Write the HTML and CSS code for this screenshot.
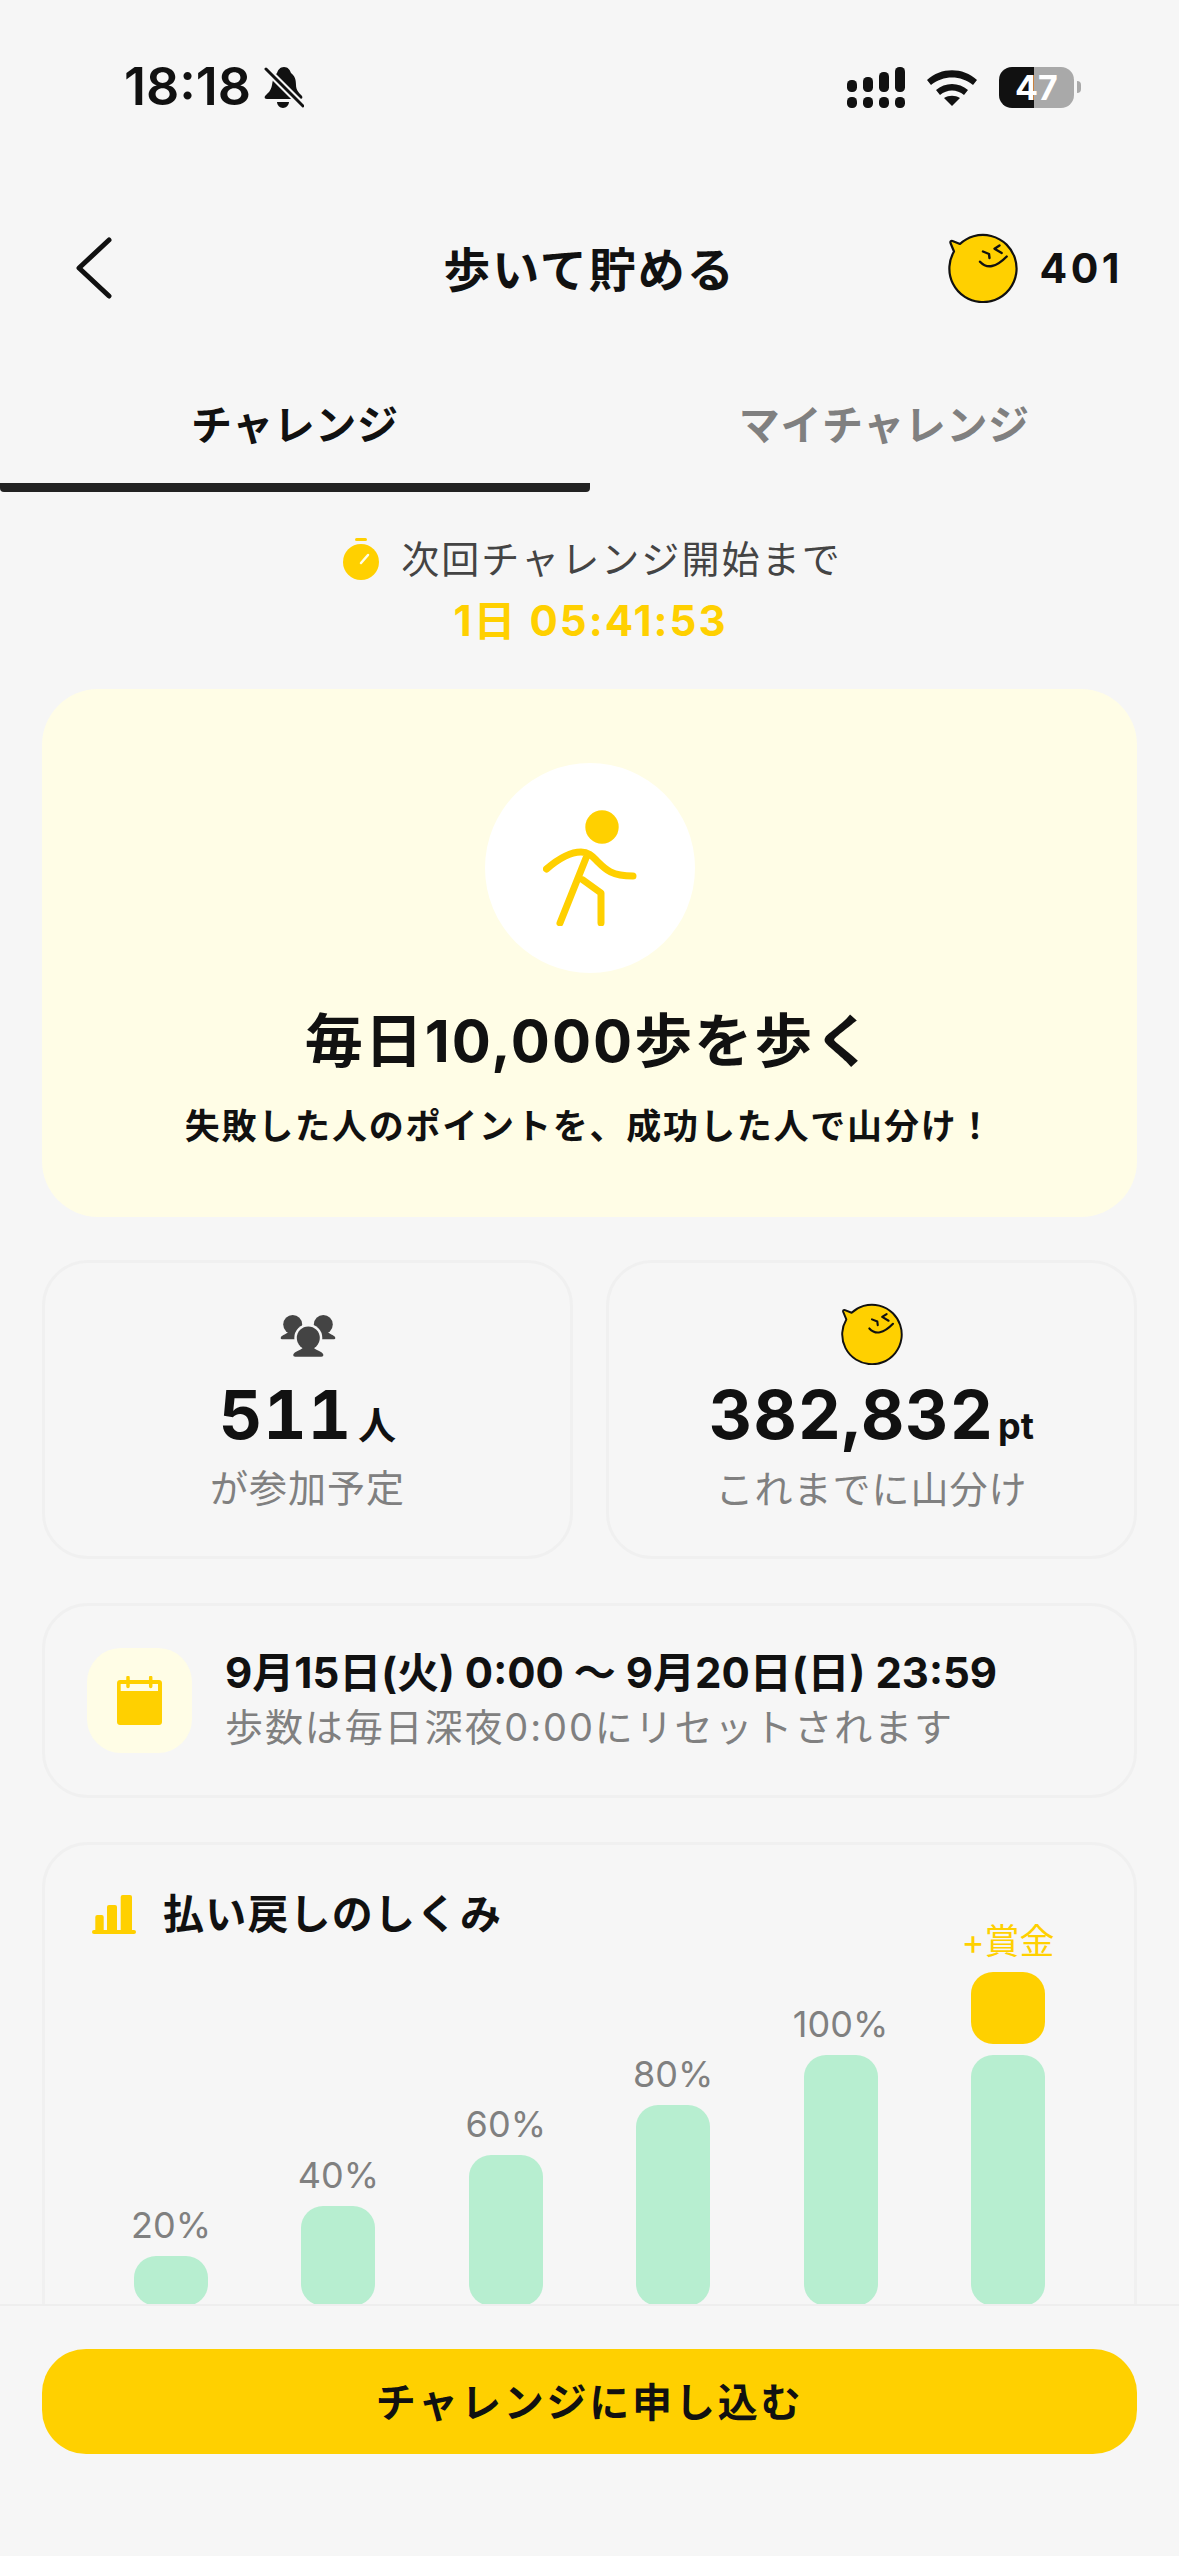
FILE: index.html
```html
<!DOCTYPE html>
<html lang="ja">
    <head>
        <title>歩いて貯める</title>
        <link rel="stylesheet" href="styles.css">
    </head>
    <body>
        <svg class="defs" width="0" height="0">
            <symbol id="coin" viewBox="0 0 70 70">
                <path d="M12 11A33.600 33.600 0 1 1 6 18.500L2.500 10c-.5-1.500.5-2.500 2-2z" fill="#ffd000" stroke="#111" stroke-width="2.200" stroke-linejoin="round"/>
                <path d="M35 18.500l6 2.500.5 4M51.500 12.500l-5 3.200 7.200 4.300M32 28.700Q42.600 40 58.700 23.500" fill="none" stroke="#111" stroke-width="2.400" stroke-linecap="round" stroke-linejoin="round"/>
            </symbol>
        </svg>

        <div class="status-bar">
            <div class="status-left">
                <span class="clock">18:18</span>
                <svg class="bell" viewBox="0 0 40 42">
                    <path d="M20 1c4 0 6 3 7 6 4 3 5 7 5 12 0 5 3 8 6 11 1 2 0 3-2 3H3c-2 0-3-1-2-3 3-3 6-5 7-11 1-6 2-9 5-12 1-3 3-6 7-6zM13 36h12c0 3-3 6-6 6s-6-3-6-6z" fill="#111"/>
                    <path d="M2 3l37 37" stroke="#f6f6f6" stroke-width="7"/>
                    <path d="M2 3l37 37" stroke="#111" stroke-width="3" stroke-linecap="round"/>
                </svg>
            </div>
            <div class="status-right">
                <svg class="signal" viewBox="0 0 58 41">
                    <rect x="0" y="13" width="10" height="12" rx="4.500"/><rect x="16" y="10" width="10" height="15" rx="4.500"/><rect x="32" y="5" width="10" height="20" rx="4.500"/><rect x="48" y="0" width="10" height="25" rx="4.500"/>
                    <rect x="0" y="30" width="10" height="11" rx="4.500"/><rect x="16" y="30" width="10" height="11" rx="4.500"/><rect x="32" y="30" width="10" height="11" rx="4.500"/><rect x="48" y="30" width="10" height="11" rx="4.500"/>
                </svg>
                <svg class="wifi" viewBox="0 0 50 38">
                    <path d="M0 12C14-1 36-1 50 12l-4 5C34 7 16 7 4 17zM9 22c9-8 23-8 32 0l-4 5c-7-6-17-6-24 0zM17 30c5-3 11-3 16 0l-8 8z"/>
                </svg>
                <div class="battery">
                    <span class="battery-level">47</span>
                </div>
                <span class="battery-tip"></span>
            </div>
        </div>

        <header class="nav">
            <svg class="back" viewBox="0 0 40 62">
                <path d="M34 3L4 31l30 28" fill="none" stroke="#111" stroke-width="5" stroke-linecap="round" stroke-linejoin="round"/>
            </svg>
            <h1 class="nav-title">歩いて貯める</h1>
            <div class="nav-points">
                <svg class="coin"><use href="#coin"/></svg>
                <span>401</span>
            </div>
        </header>

        <div class="tabs">
            <div class="tab active">チャレンジ</div>
            <div class="tab">マイチャレンジ</div>
        </div>

        <div class="countdown">
            <p class="countdown-label">
                <svg class="timer" viewBox="0 0 36 42">
                    <rect x="12" y="0" width="12" height="3" rx="1.500" fill="#ffd000"/>
                    <circle cx="18" cy="24" r="18" fill="#ffd000"/>
                    <path d="M18 25l7-8" stroke="#fffde6" stroke-width="2.500" stroke-linecap="round"/>
                </svg>
                次回チャレンジ開始まで
            </p>
            <p class="countdown-time">1日 05:41:53</p>
        </div>

        <section class="hero">
            <div class="hero-circle">
                <svg class="walker" viewBox="0 0 94 116">
                    <circle cx="59" cy="17" r="16.700" fill="#ffd000"/>
                    <path d="M3.500 59C14 50 26 42 38 42c8 0 12 5 16 9 8 8 14 15 36 15M43 48L17 113M40 70l18 13v30" fill="none" stroke="#ffd000" stroke-width="7" stroke-linecap="round" stroke-linejoin="round"/>
                </svg>
            </div>
            <h2 class="hero-title">毎日10,000歩を歩く</h2>
            <p class="hero-text">失敗した人のポイントを、成功した人で山分け！</p>
        </section>

        <div class="stats">
            <div class="card stat">
                <svg class="people" viewBox="0 0 56 42">
                    <g fill="#444">
                        <circle cx="12.700" cy="9.500" r="9.500"/>
                        <circle cx="43.300" cy="9.500" r="9.500"/>
                        <path d="M1 22c1-2 6-3 8-6h8v8.300H2c-1.500 0-1.500-1.300-1-2.300zM55 22c-1-2-6-3-8-6h-8v8.300h15c1.500 0 1.500-1.300 1-2.300z"/>
                    </g>
                    <circle cx="28.300" cy="23" r="14" fill="#f6f6f6"/>
                    <path d="M10 42l8-10h21l8 10z" fill="#f6f6f6"/>
                    <circle cx="28.300" cy="23" r="11.500" fill="#444"/>
                    <path d="M13.300 39.500c1-3 7-4 10-7h10c3 3 9 4 10 7 .3 1.300-.7 2.300-2 2.300H15.300c-1.300 0-2.300-1-2-2.300z" fill="#444"/>
                </svg>
                <p class="stat-value">511<small>人</small></p>
                <p class="stat-label">が参加予定</p>
            </div>
            <div class="card stat">
                <svg class="stat-coin"><use href="#coin"/></svg>
                <p class="stat-value">382,832<small class="pt">pt</small></p>
                <p class="stat-label">これまでに山分け</p>
            </div>
        </div>

        <div class="card period">
            <div class="period-icon">
                <svg class="calendar" viewBox="0 0 45 49">
                    <path d="M3 4h39c1.700 0 3 1.300 3 3v39c0 1.700-1.300 3-3 3H3c-1.700 0-3-1.300-3-3V7c0-1.700 1.300-3 3-3z" fill="#ffd000"/>
                    <rect x="3.700" y="8" width="37.300" height="7" fill="#fffde6"/>
                    <path d="M11 1.500v9M33.700 1.500v9" stroke="#ffd000" stroke-width="3.500" stroke-linecap="round"/>
                </svg>
            </div>
            <div class="period-text">
                <p class="period-date">9月15日(火) 0:00 〜 9月20日(日) 23:59</p>
                <p class="period-note">歩数は毎日深夜0:00にリセットされます</p>
            </div>
        </div>

        <section class="card chart">
            <div class="chart-head">
                <svg class="chart-icon" viewBox="0 0 44 39">
                    <g fill="#ffd000">
                        <rect x="3.300" y="20" width="8.400" height="17" rx="2"/>
                        <rect x="15" y="10" width="10" height="27" rx="2"/>
                        <rect x="28.700" y="0" width="11.300" height="37" rx="2"/>
                        <rect x="0" y="35" width="44" height="4" rx="2"/>
                    </g>
                </svg>
                <h3 class="chart-title">払い戻しのしくみ</h3>
            </div>
            <div class="bars">
                <div class="bar-col"><span class="bar-label">20%</span><div class="bar h20"></div></div>
                <div class="bar-col"><span class="bar-label">40%</span><div class="bar h40"></div></div>
                <div class="bar-col"><span class="bar-label">60%</span><div class="bar h60"></div></div>
                <div class="bar-col"><span class="bar-label">80%</span><div class="bar h80"></div></div>
                <div class="bar-col"><span class="bar-label">100%</span><div class="bar h100"></div></div>
                <div class="bar-col">
                    <span class="bar-label bonus">+賞金</span>
                    <div class="bar-bonus"></div>
                    <div class="bar h100"></div>
                </div>
            </div>
        </section>

        <footer class="footer">
            <button class="apply">チャレンジに申し込む</button>
        </footer>
    </body>
</html>
```

FILE: styles.css
```css
* {
    box-sizing: border-box;
}
html, body {
    margin: 0;
    height: 2556px;
    overflow: hidden;
}
body {
    position: relative;
    background-color: #f6f6f6;
    color: #111;
    font-family: "Inter", "Noto Sans CJK JP", sans-serif;
}
p, h1, h2, h3 {
    margin: 0;
}
.defs {
    position: absolute;
}

/* status bar */
.status-bar {
    height: 180px;
    padding: 64px 98px 0 124px;
    display: flex;
    justify-content: space-between;
    align-items: flex-start;
}
.status-left {
    display: flex;
    align-items: center;
    gap: 13px;
}
.clock {
    font-size: 52px;
    font-weight: 600;
    line-height: 46px;
}
.bell {
    width: 40px;
    height: 42px;
}
.status-right {
    display: flex;
    align-items: center;
    height: 46px;
}
.signal {
    width: 58px;
    height: 41px;
    fill: #111;
}
.wifi {
    width: 50px;
    height: 38px;
    margin-left: 22px;
    fill: #111;
}
.battery {
    width: 75px;
    height: 41px;
    margin-left: 22px;
    border-radius: 13px;
    background: linear-gradient(to right, #111 47%, #a9a9a9 47%);
    text-align: center;
}
.battery-level {
    color: #fff;
    font-size: 34px;
    font-weight: 700;
    line-height: 41px;
    display: block;
}
.battery-tip {
    width: 4px;
    height: 12px;
    margin-left: 3px;
    border-radius: 0 6px 6px 0;
    background-color: #a9a9a9;
}

/* nav */
.nav {
    height: 180px;
    padding: 0 56px 4px 75px;
    display: flex;
    align-items: center;
    justify-content: space-between;
    position: relative;
}
.back {
    width: 40px;
    height: 62px;
}
.nav-title {
    position: absolute;
    left: 0;
    right: 0;
    margin-top: -3px;
    text-align: center;
    font-size: 47px;
    font-weight: 700;
    letter-spacing: 2px;
}
.nav-points {
    display: flex;
    align-items: center;
    gap: 21px;
    font-size: 41px;
    font-weight: 700;
    letter-spacing: 3.500px;
}
.coin {
    width: 70px;
    height: 70px;
}

/* tabs */
.tabs {
    display: flex;
    height: 132px;
}
.tab {
    width: 590px;
    height: 132px;
    line-height: 130px;
    text-align: center;
    font-size: 41px;
    font-weight: 700;
    letter-spacing: 0.600px;
    color: #808080;
    border-bottom: 9px solid transparent;
}
.tab.active {
    color: #111;
    border-bottom-color: #222;
    border-bottom-left-radius: 4px;
    border-bottom-right-radius: 4px;
}

/* countdown */
.countdown {
    padding-top: 39px;
    height: 197px;
    text-align: center;
}
.countdown-label {
    display: flex;
    justify-content: center;
    align-items: center;
    gap: 22px;
    padding-left: 6px;
    font-size: 38px;
    line-height: 56px;
    letter-spacing: 2.100px;
    color: #444;
}
.timer {
    width: 36px;
    height: 42px;
}
.countdown-time {
    margin-top: 6px;
    padding-left: 2px;
    color: #ffd000;
    font-size: 42px;
    font-weight: 700;
    line-height: 56px;
    letter-spacing: 2px;
}

/* hero */
.hero {
    margin: 0 42px;
    height: 528px;
    padding-top: 74px;
    border-radius: 56px;
    background-color: #fffde6;
    display: flex;
    flex-direction: column;
    align-items: center;
}
.hero-circle {
    width: 210px;
    height: 210px;
    border-radius: 50%;
    background-color: #fff;
    display: flex;
    align-items: center;
    justify-content: center;
}
.walker {
    width: 94px;
    height: 116px;
}
.hero-title {
    margin-top: 28px;
    font-size: 58px;
    font-weight: 700;
    line-height: 80px;
    letter-spacing: 2px;
}
.hero-text {
    margin-top: 20px;
    font-size: 35px;
    font-weight: 700;
    line-height: 50px;
    letter-spacing: 1.800px;
}

/* cards */
.card {
    border: 3px solid #f0f0f0;
    border-radius: 46px;
}
.stats {
    margin: 43px 42px 0;
    display: grid;
    grid-template-columns: 1fr 1fr;
    gap: 33px;
}
.stat {
    height: 299px;
    padding-top: 52px;
    display: flex;
    flex-direction: column;
    align-items: center;
}
.people {
    width: 56px;
    height: 42px;
}
.stat-coin {
    width: 62px;
    height: 62px;
    margin-top: -12px;
    margin-bottom: -8px;
}
.stat-value {
    margin-top: 18px;
    font-size: 67px;
    font-weight: 700;
    line-height: 80px;
    font-feature-settings: "tnum";
    letter-spacing: 1px;
}
.stat-value small {
    margin-left: 6px;
    font-size: 38px;
    font-weight: 700;
    letter-spacing: 0;
}
.stat-value small.pt {
    font-size: 36px;
    margin-left: 4px;
}
.stat-label {
    margin-top: -4px;
    color: #808080;
    font-size: 38px;
    line-height: 54px;
    letter-spacing: 1px;
}

/* period */
.period {
    margin: 44px 42px 0;
    height: 195px;
    padding-left: 42px;
    display: flex;
    align-items: center;
    gap: 33px;
}
.period-icon {
    width: 105px;
    height: 105px;
    border-radius: 34px;
    background-color: #fffde6;
    display: flex;
    align-items: center;
    justify-content: center;
}
.calendar {
    width: 45px;
    height: 49px;
}
.period-text {
    margin-top: -3px;
}
.period-date {
    font-size: 42px;
    font-weight: 700;
    line-height: 56px;
}
.period-note {
    color: #808080;
    font-size: 38px;
    line-height: 52px;
    letter-spacing: 1.900px;
}

/* chart */
.chart {
    margin: 44px 42px 0;
    height: 700px;
    padding: 39px 48px 0 47px;
}
.chart-head {
    display: flex;
    align-items: center;
    gap: 27px;
}
.chart-icon {
    width: 44px;
    height: 39px;
}
.chart-title {
    font-size: 41px;
    font-weight: 700;
    line-height: 60px;
    letter-spacing: 1.200px;
}
.bars {
    height: 366px;
    margin-top: -4px;
    padding: 0 41px 0 42px;
    display: flex;
    justify-content: space-between;
    align-items: flex-end;
}
.bar-col {
    width: 74px;
    display: flex;
    flex-direction: column;
    align-items: center;
}
.bar {
    width: 74px;
    border-radius: 22px;
    background-color: #b7eed0;
}
.h20 { height: 50px; }
.h40 { height: 100px; }
.h60 { height: 151px; }
.h80 { height: 201px; }
.h100 { height: 251px; }
.bar-label {
    white-space: nowrap;
    margin-bottom: 10px;
    color: #808080;
    font-size: 36px;
    line-height: 42px;
}
.bar-label.bonus {
    color: #ffd000;
    font-size: 35px;
}
.bar-bonus {
    width: 74px;
    height: 72px;
    margin-bottom: 11px;
    border-radius: 22px;
    background-color: #ffd000;
}

/* footer */
.footer {
    position: absolute;
    left: 0;
    right: 0;
    bottom: 0;
    height: 252px;
    padding: 43px 42px 0;
    background-color: #f6f6f6;
    border-top: 2px solid #eeeeee;
}
.apply {
    display: block;
    width: 100%;
    height: 105px;
    padding-bottom: 5px;
    border: none;
    border-radius: 44px;
    background-color: #ffd000;
    color: #111;
    font-family: inherit;
    font-size: 40px;
    font-weight: 700;
    letter-spacing: 2.800px;
}
```
